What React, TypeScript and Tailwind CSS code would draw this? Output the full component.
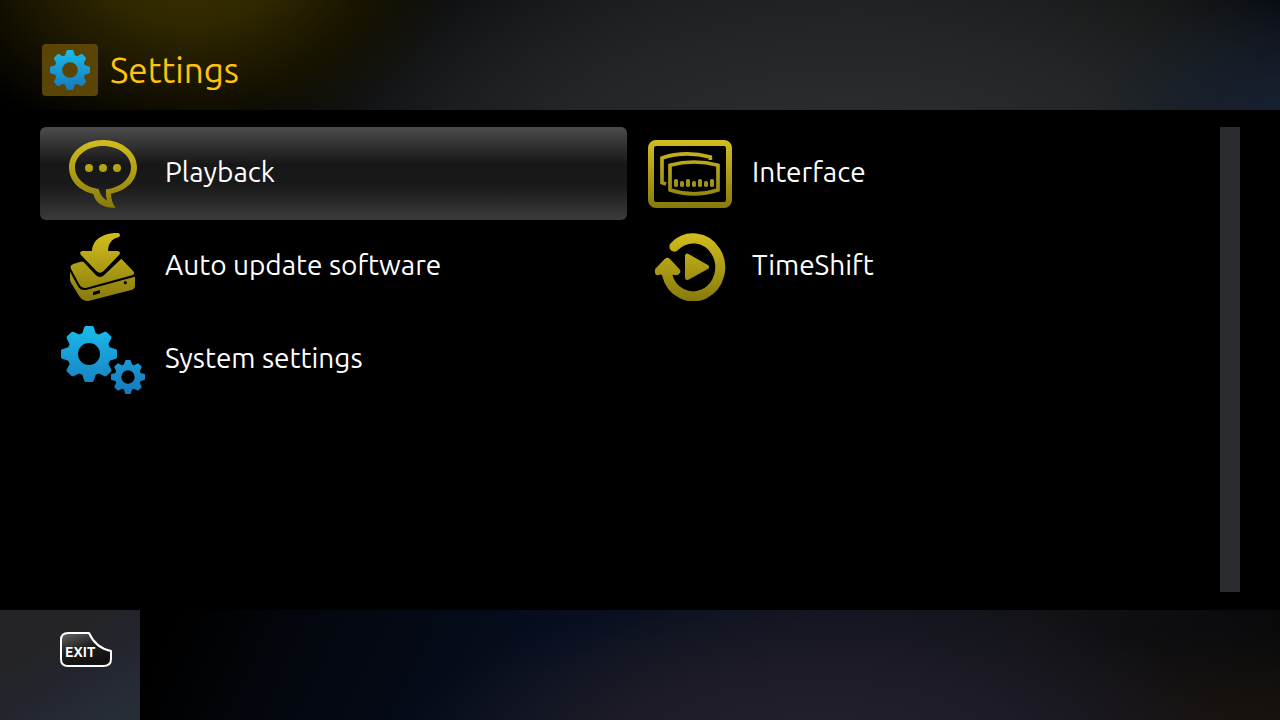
import React from "react";
import clsx from "clsx";

type IconProps = {
  children: React.ReactNode;
};

type SettingsItem = {
  id: string;
  label: string;
  icon: React.ReactNode;
};

// Outline of a gear with eight tapered teeth around (cx, cy)
function gearPath(cx: number, cy: number, r: number, hole: number) {
  const tooth = [
    [-0.24, -0.74],
    [-0.17, -0.96],
    [-0.13, -1],
    [0.13, -1],
    [0.17, -0.96],
    [0.24, -0.74],
  ];
  const points: string[] = [];
  for (let i = 0; i < 8; i++) {
    const a = (i * Math.PI) / 4;
    for (const [x, y] of tooth) {
      const px = cx + r * (x * Math.cos(a) - y * Math.sin(a));
      const py = cy + r * (x * Math.sin(a) + y * Math.cos(a));
      points.push(`${px.toFixed(1)} ${py.toFixed(1)}`);
    }
  }
  return `M${points.join("L")}Z M${cx - hole} ${cy}a${hole} ${hole} 0 1 0 ${hole * 2} 0a${hole} ${hole} 0 1 0 ${-hole * 2} 0Z`;
}

// Gradients shared by all icons
function IconGradients() {
  return (
    <svg className="absolute w-0 h-0" aria-hidden="true">
      <defs>
        <linearGradient id="gold" gradientUnits="userSpaceOnUse" x1="0" y1="0" x2="0" y2="204">
          <stop offset="0" stopColor="#d2be1e" />
          <stop offset="1" stopColor="#877a0c" />
        </linearGradient>
        <linearGradient id="blue" gradientUnits="userSpaceOnUse" x1="0" y1="0" x2="0" y2="204">
          <stop offset="0" stopColor="#1abbea" />
          <stop offset="1" stopColor="#1878bc" />
        </linearGradient>
        <linearGradient id="key" x1="0" y1="0" x2="0.5" y2="1">
          <stop offset="0" stopColor="#666666" />
          <stop offset="0.55" stopColor="#1c1c1c" />
          <stop offset="1" stopColor="#111111" />
        </linearGradient>
      </defs>
    </svg>
  );
}

function Icon({ children }: IconProps) {
  return (
    <svg viewBox="0 0 252 204" className="w-[84px] h-[68px] shrink-0" aria-hidden="true">
      {children}
    </svg>
  );
}

function PlaybackIcon() {
  return (
    <Icon>
      <g fill="url(#gold)">
        <path
          fillRule="evenodd"
          d="M126 0C182 0 228 36 228 82C228 122 196 153 150 161C150 176 155 192 164 203C128 206 103 189 97 162C55 153 24 122 24 82C24 36 70 0 126 0ZM126 18C80 18 42 46 42 82C42 115 72 142 113 147C117 163 125 175 138 182C135 171 134 159 135 148C178 144 210 116 210 82C210 46 172 18 126 18Z"
        />
        <circle cx="84" cy="84" r="12" />
        <circle cx="126" cy="84" r="12" />
        <circle cx="168" cy="84" r="12" />
      </g>
    </Icon>
  );
}

function InterfaceIcon() {
  return (
    <Icon>
      <rect x="9" y="9" width="234" height="186" rx="15" fill="none" stroke="url(#gold)" strokeWidth="18" />
      <g fill="none" stroke="url(#gold)" strokeWidth="11">
        <path d="M54 132L42 128V54Q110 31 187 51V60" />
        <path d="M66 76Q138 56 210 76V150Q138 173 66 150Z" />
      </g>
      <g fill="url(#gold)">
        {[78, 114, 150, 186].map((x) => (
          <rect key={x} x={x} y="117" width="12" height="24" rx="5" />
        ))}
        {[96, 132, 168].map((x) => (
          <rect key={x} x={x} y="123" width="12" height="18" rx="5" />
        ))}
      </g>
    </Icon>
  );
}

function UpdateIcon() {
  return (
    <Icon>
      <g fill="url(#gold)">
        <path d="M93 54C94 22 122 0 170 0Q177 0 177 6Q177 11 172 13C152 18 142 32 141 54H170Q182 56 174 66L128 114Q117 124 106 114L60 66Q53 56 64 54Z" />
        <path d="M59 86L37 93Q25 98 30 108L56 156Q63 168 77 164L213 127Q224 123 217 115L181 77L129 127Q117 137 105 127L67 86Z" />
        <path
          fillRule="evenodd"
          d="M27 116L52 162Q60 174 78 170L222 131V160Q222 167 214 170L85 203Q66 207 55 190L30 149Q27 144 27 138ZM96 177V187L117 181V171ZM188 149a5 5 0 1 0 10 0a5 5 0 1 0 -10 0Z"
        />
      </g>
    </Icon>
  );
}

function TimeShiftIcon() {
  return (
    <Icon>
      <path
        d="M79 41A81 87 0 1 1 57 124"
        fill="none"
        stroke="url(#gold)"
        strokeWidth="30"
        strokeLinecap="round"
      />
      <path
        d="M50 78Q58 71 66 78L94 108Q100 115 95 121Q89 130 78 125L75 126H40L37 124Q30 130 22 124Q18 114 22 107Z"
        fill="url(#gold)"
      />
      <path
        d="M118 69V134L176 102Z"
        fill="url(#gold)"
        stroke="url(#gold)"
        strokeWidth="14"
        strokeLinejoin="round"
      />
    </Icon>
  );
}

function SystemIcon() {
  return (
    <Icon>
      <path fillRule="evenodd" fill="url(#blue)" d={gearPath(84, 84, 84, 33)} />
      <path fillRule="evenodd" fill="url(#blue)" d={gearPath(201, 153, 51, 20)} />
    </Icon>
  );
}

const items: SettingsItem[] = [
  { id: "playback", label: "Playback", icon: <PlaybackIcon /> },
  { id: "interface", label: "Interface", icon: <InterfaceIcon /> },
  { id: "update", label: "Auto update software", icon: <UpdateIcon /> },
  { id: "timeshift", label: "TimeShift", icon: <TimeShiftIcon /> },
  { id: "system", label: "System settings", icon: <SystemIcon /> },
];

export default function App() {
  const [selected, setSelected] = React.useState("playback");

  return (
    <div className="min-h-screen flex flex-col bg-black text-white font-['Ubuntu','Noto_Sans',sans-serif]">
      <IconGradients />

      <header className="h-[110px] pt-[30px] px-[42px] flex items-center gap-3 bg-black bg-[radial-gradient(ellipse_270px_190px_at_190px_-40px,#3c3100_0px,#2f2700_35%,#191500_65%,transparent_100%),radial-gradient(ellipse_200px_110px_at_100%_100%,#172031,transparent),radial-gradient(ellipse_600px_260px_at_66%_150%,#2d3132_0%,#232626_50%,transparent_100%),linear-gradient(110deg,#000000_14%,#0b0c0e_34%,#141717_50%,#181b1b_65%,#0f1111_88%,#040812_100%)]">
        <div className="w-14 h-[52px] rounded bg-[#5a4505] flex items-center justify-center">
          <svg viewBox="0 0 204 204" className="w-10 h-10" aria-hidden="true">
            <path fillRule="evenodd" fill="url(#blue)" d={gearPath(102, 102, 102, 40)} />
          </svg>
        </div>
        <h1 className="text-[35px] leading-10 text-[#ffc20e]">Settings</h1>
      </header>

      <main className="flex-1 flex gap-[6px] pl-10 pr-10 pt-[17px] pb-[18px]">
        <div className="flex-1 grid grid-cols-2 auto-rows-[93px] content-start">
          {items.map((item) => (
            <button
              key={item.id}
              type="button"
              onClick={() => setSelected(item.id)}
              className={clsx(
                "flex items-center gap-5 pl-[21px] rounded-md text-left text-[28px] leading-9 outline-none",
                selected === item.id &&
                  "bg-[linear-gradient(180deg,#4c4c4c_0%,#171717_40%,#191919_62%,#3b3b3b_100%)]"
              )}
            >
              {item.icon}
              <span className="pb-1">{item.label}</span>
            </button>
          ))}
        </div>
        {/* Scroll track */}
        <div className="w-5 bg-[#2b2c30]" />
      </main>

      <footer className="h-[110px] flex bg-[radial-gradient(ellipse_420px_160px_at_64%_125%,#22212d_0%,#1c1b26_50%,transparent_100%),radial-gradient(ellipse_300px_110px_at_98%_115%,#1c150f,transparent),linear-gradient(115deg,#000000_14%,#03060c_22%,#060e20_44%,#11131f_62%,#121217_78%,#080809_100%)]">
        <div className="w-[140px] pl-[60px] pt-[22px] bg-[linear-gradient(150deg,#242426_30%,#23252e_55%,#272d36_90%)]">
          <button type="button" className="block">
            <svg viewBox="0 0 52 35" className="w-[52px] h-[35px]">
              <path
                d="M8 1H29C33 10 41 17 51 19V27Q51 34 43 34H8Q1 34 1 27V8Q1 1 8 1Z"
                fill="url(#key)"
                stroke="#ffffff"
                strokeWidth="2"
                strokeLinejoin="round"
              />
              <text x="5" y="25" fill="#ffffff" className="text-[14px] font-bold">
                EXIT
              </text>
            </svg>
          </button>
        </div>
      </footer>
    </div>
  );
}
